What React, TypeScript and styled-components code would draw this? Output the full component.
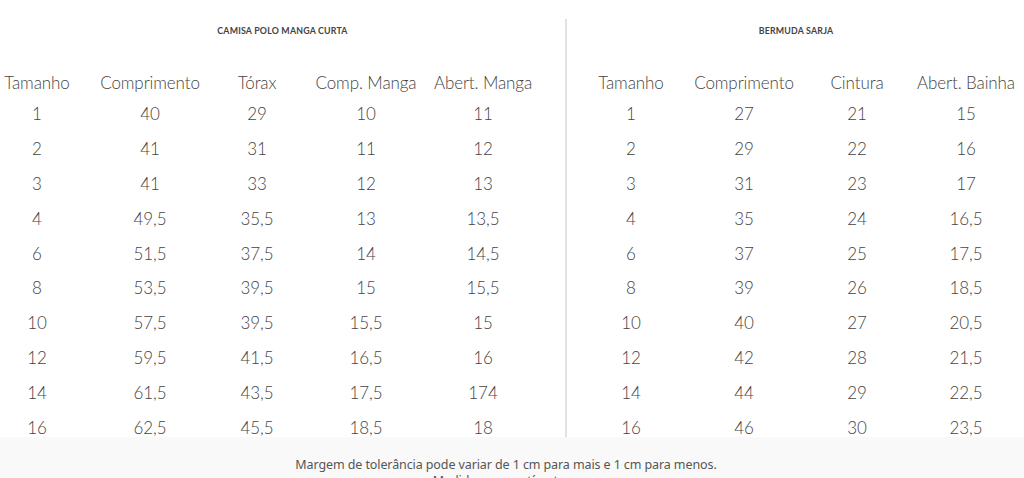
import React from "react";
import styled, { createGlobalStyle } from "styled-components";

const Global = createGlobalStyle`
  html, body { margin: 0; padding: 0; background: #ffffff; }
  body { font-family: Lato, "Noto Sans", sans-serif; color: #555; }
`;

const Page = styled.div`
  width: 1024px;
  height: 478px;
  overflow: hidden;
  display: flex;
  flex-direction: column;
  background: #fff;
`;

const Tables = styled.div`
  display: flex;
  height: 437px;
  padding-top: 19px;
  box-sizing: border-box;
`;

const Panel = styled.section<{ $w: number; $pl: number }>`
  width: ${(p) => p.$w}px;
  padding-left: ${(p) => p.$pl}px;
  box-sizing: border-box;
  display: flex;
  flex-direction: column;
`;

const Title = styled.h2`
  margin: 6px 0 0;
  height: 24px;
  display: flex;
  align-items: center;
  justify-content: center;
  font-size: 8.8px;
  font-weight: 700;
  letter-spacing: 0.2px;
  color: #444;
  text-transform: uppercase;
`;

const Divider = styled.div`
  width: 2px;
  background: #e2e2e2;
  align-self: stretch;
`;

const Grid = styled.div<{ $cols: string }>`
  display: grid;
  grid-template-columns: ${(p) => p.$cols};
  grid-template-rows: 26px repeat(10, 34.8px);
  margin-top: 33px;
`;

const Cell = styled.div<{ $head?: boolean }>`
  display: flex;
  align-items: center;
  justify-content: center;
  font-size: 17px;
  font-weight: 300;
  color: #444;
  white-space: nowrap;
  letter-spacing: -0.1px;
  padding-top: ${(p) => (p.$head ? "0" : "3px")};
`;

const Footer = styled.footer`
  flex: 1;
  background: #f9f9f9;
  display: flex;
  flex-direction: column;
  align-items: center;
  padding-top: 20px;
  padding-right: 12px;
  font-size: 12.5px;
  color: #555;
  line-height: 16px;
  font-family: "Noto Sans", sans-serif;
`;

const FooterLine = styled.p`
  margin: 0;
  letter-spacing: -0.1px;
`;

type Table = { title: string; headers: string[]; rows: string[][]; cols: string };

const camisa: Table = {
  title: "Camisa Polo Manga Curta",
  headers: ["Tamanho", "Comprimento", "Tórax", "Comp. Manga", "Abert. Manga"],
  cols: "74px 152px 62px 156px 78px",
  rows: [
    ["1", "40", "29", "10", "11"],
    ["2", "41", "31", "11", "12"],
    ["3", "41", "33", "12", "13"],
    ["4", "49,5", "35,5", "13", "13,5"],
    ["6", "51,5", "37,5", "14", "14,5"],
    ["8", "53,5", "39,5", "15", "15,5"],
    ["10", "57,5", "39,5", "15,5", "15"],
    ["12", "59,5", "41,5", "16,5", "16"],
    ["14", "61,5", "43,5", "17,5", "174"],
    ["16", "62,5", "45,5", "18,5", "18"],
  ],
};

const bermuda: Table = {
  title: "Bermuda Sarja",
  headers: ["Tamanho", "Comprimento", "Cintura", "Abert. Bainha"],
  cols: "126px 100px 126px 92px",
  rows: [
    ["1", "27", "21", "15"],
    ["2", "29", "22", "16"],
    ["3", "31", "23", "17"],
    ["4", "35", "24", "16,5"],
    ["6", "37", "25", "17,5"],
    ["8", "39", "26", "18,5"],
    ["10", "40", "27", "20,5"],
    ["12", "42", "28", "21,5"],
    ["14", "44", "29", "22,5"],
    ["16", "46", "30", "23,5"],
  ],
};

const SizeTable = ({ t }: { t: Table }) => (
  <>
    <Title>{t.title}</Title>
    <Grid $cols={t.cols}>
      {t.headers.map((h) => (
        <Cell $head key={h}>{h}</Cell>
      ))}
      {t.rows.map((r, i) => r.map((v, j) => <Cell key={`${i}-${j}`}>{v}</Cell>))}
    </Grid>
  </>
);

export default function App() {
  return (
    <Page>
      <Global />
      <Tables>
        <Panel $w={565} $pl={0}>
          <SizeTable t={camisa} />
        </Panel>
        <Divider />
        <Panel $w={457} $pl={1}>
          <SizeTable t={bermuda} />
        </Panel>
      </Tables>
      <Footer>
        <FooterLine>Margem de tolerância pode variar de 1 cm para mais e 1 cm para menos.</FooterLine>
        <FooterLine>Medidas em centímetros.</FooterLine>
      </Footer>
    </Page>
  );
}
